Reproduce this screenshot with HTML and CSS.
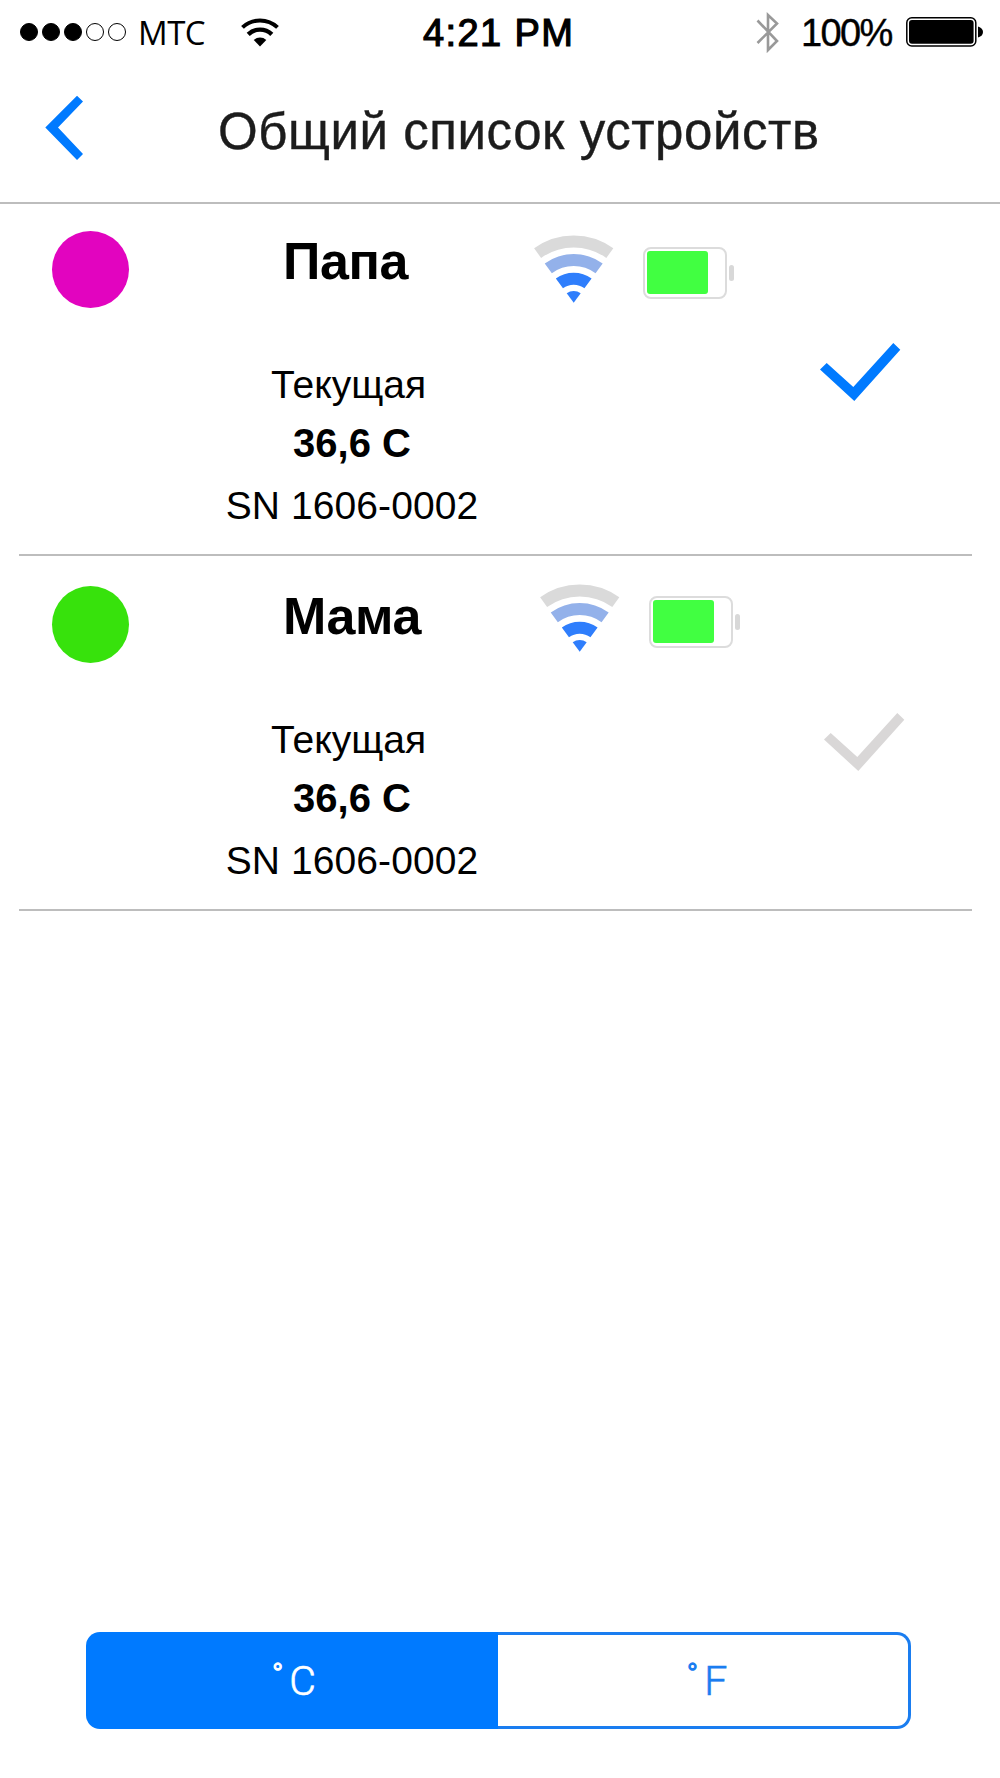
FILE: index.html
```html
<!DOCTYPE html>
<html lang="ru">
<head>
    <meta charset="UTF-8">
    <meta name="viewport" content="width=device-width, initial-scale=1.0">
    <title>Общий список устройств</title>
    <link rel="stylesheet" href="styles.css">
</head>
<body>
    <div class="status-bar">
        <div class="status-left">
            <div class="signal">
                <span class="signal-dot full"></span>
                <span class="signal-dot full"></span>
                <span class="signal-dot full"></span>
                <span class="signal-dot"></span>
                <span class="signal-dot"></span>
            </div>
            <span class="carrier">МТС</span>
            <svg class="status-wifi" width="38" height="29" viewBox="0 0 38 29">
                <path d="M1.5 9.4 A25.5 25.5 0 0 1 36.5 9.4" fill="none" stroke="#000" stroke-width="4"/>
                <path d="M7.2 16.4 A17 17 0 0 1 30.8 16.4" fill="none" stroke="#000" stroke-width="4.4"/>
                <path d="M12.7 22 A9.5 9.5 0 0 1 25.3 22 L19 28.5 Z"/>
            </svg>
        </div>
        <span class="time">4:21 PM</span>
        <div class="status-right">
            <svg width="24" height="43" viewBox="0 0 24 43">
                <path d="M1.5 9.5 L21 30 L12 39 V4 L21 12.5 L1.5 32" fill="none" stroke="#999" stroke-width="2.6"/>
            </svg>
            <span class="percent">100%</span>
            <svg class="status-battery" width="78" height="30" viewBox="0 0 78 30">
                <rect x="0.8" y="0.8" width="69" height="28.2" rx="5" fill="#fff" stroke="#000" stroke-width="1.5"/>
                <rect x="3" y="3" width="64.6" height="23.8" rx="3"/>
                <path d="M72 9.5 Q77 11 77 15 Q77 19 72 20.5 Z"/>
            </svg>
        </div>
    </div>

    <div class="header">
        <svg class="back" width="39" height="66" viewBox="0 0 39 66">
            <path d="M0.3 32.4 L32 0.7 L38 6.4 L13 32.4 L38 59 L32 65 Z" fill="#007aff"/>
        </svg>
        <h1>Общий список устройств</h1>
    </div>

    <div class="device-list">
        <div class="device">
            <div class="color-dot pink"></div>
            <div class="info">
                <h2>Папа</h2>
                <p class="label">Текущая</p>
                <p class="temperature">36,6 C</p>
                <p class="serial">SN 1606-0002</p>
            </div>
            <div class="indicators">
                <svg width="80" height="68" viewBox="0 0 80 68">
                    <g fill="none" stroke-width="12">
                        <path d="M3.6 18.1 A61.7 61.7 0 0 1 75.8 18.1" stroke="#dadada"/>
                        <path d="M14.3 33.4 A42.7 42.7 0 0 1 65.1 33.4" stroke="#93b1ea"/>
                        <path d="M25.4 48.4 A24 24 0 0 1 54 48.4" stroke="#2f7efc"/>
                    </g>
                    <path d="M32.7 58.3 A11.7 11.7 0 0 1 46.7 58.3 L39.7 67.7 Z" fill="#2f7efc"/>
                </svg>
                <div class="battery"><div class="battery-level"></div></div>
            </div>
            <svg class="check active" width="81" height="59" viewBox="0 0 81 59">
                <path d="M0 26.5 L6.7 20 L33.3 44 L73.3 0 L80.3 6.7 L34.3 58 Z"/>
            </svg>
        </div>

        <div class="device second">
            <div class="color-dot green"></div>
            <div class="info">
                <h2>Мама</h2>
                <p class="label">Текущая</p>
                <p class="temperature">36,6 C</p>
                <p class="serial">SN 1606-0002</p>
            </div>
            <div class="indicators">
                <svg width="80" height="68" viewBox="0 0 80 68">
                    <g fill="none" stroke-width="12">
                        <path d="M3.6 18.1 A61.7 61.7 0 0 1 75.8 18.1" stroke="#dadada"/>
                        <path d="M14.3 33.4 A42.7 42.7 0 0 1 65.1 33.4" stroke="#93b1ea"/>
                        <path d="M25.4 48.4 A24 24 0 0 1 54 48.4" stroke="#2f7efc"/>
                    </g>
                    <path d="M32.7 58.3 A11.7 11.7 0 0 1 46.7 58.3 L39.7 67.7 Z" fill="#2f7efc"/>
                </svg>
                <div class="battery"><div class="battery-level"></div></div>
            </div>
            <svg class="check" width="81" height="59" viewBox="0 0 81 59">
                <path d="M0 26.5 L6.7 20 L33.3 44 L73.3 0 L80.3 6.7 L34.3 58 Z"/>
            </svg>
        </div>
    </div>

    <div class="units">
        <button class="unit selected"><span class="degree">°</span>C</button>
        <button class="unit"><span class="degree">°</span>F</button>
    </div>
</body>
</html>
```
FILE: styles.css
```css
* {
    margin: 0;
    padding: 0;
    box-sizing: border-box;
}

body {
    font-family: "Liberation Sans", Arial, sans-serif;
    background: #fff;
    color: #000;
    width: 1000px;
    height: 1778px;
    display: flex;
    flex-direction: column;
    overflow: hidden;
}

svg {
    display: block;
    flex-shrink: 0;
}

/* status bar */
.status-bar {
    height: 64px;
    padding: 0 16px 0 20px;
    display: grid;
    grid-template-columns: 403px 1fr auto;
    align-items: center;
}

.status-left, .status-right {
    display: flex;
    align-items: center;
}

.signal {
    display: flex;
    gap: 4px;
}

.signal-dot {
    width: 18px;
    height: 18px;
    border: 1.5px solid #000;
    border-radius: 50%;
}

.signal-dot.full {
    background: #000;
}

.carrier {
    font-family: "Open Sans", sans-serif;
    font-size: 33px;
    line-height: 62px;
    padding-top: 2px;
    margin-left: 12px;
    letter-spacing: -0.5px;
    width: 85px;
}

.status-wifi {
    margin-left: 18px;
}

.time {
    font-size: 38px;
    line-height: 62px;
    padding-top: 2px;
    letter-spacing: 1.4px;
    -webkit-text-stroke: 1.2px #000;
}

.percent {
    font-size: 38px;
    line-height: 61px;
    padding-top: 3px;
    letter-spacing: -1.6px;
    margin-left: 21px;
    width: 105px;
    -webkit-text-stroke: 0.4px #000;
}

/* header */
.header {
    height: 140px;
    padding-left: 45px;
    border-bottom: 2px solid #bdbdbd;
    display: flex;
    align-items: flex-start;
}

.back {
    margin-top: 31px;
}

.header h1 {
    font-size: 51px;
    font-weight: normal;
    line-height: 60px;
    letter-spacing: 0.55px;
    color: #1c1c1c;
    margin: 38px 0 0 134px;
    white-space: nowrap;
    -webkit-text-stroke: 0.4px #1c1c1c;
}

/* devices */
.device-list {
    margin: -3px 28px 0 19px;
}

.device {
    height: 355px;
    border-bottom: 2px solid #bdbdbd;
    display: flex;
    align-items: flex-start;
}

.color-dot {
    width: 77px;
    height: 77px;
    margin: 30px 96px 0 33px;
    border-radius: 50%;
    flex-shrink: 0;
}

.color-dot.pink {
    background: #e204bf;
}

.color-dot.green {
    background: #37e20c;
}

.info {
    width: 254px;
    padding-top: 30px;
    text-align: center;
    white-space: nowrap;
}

.info h2 {
    font-size: 52px;
    line-height: 60px;
    letter-spacing: -0.4px;
    text-align: left;
    padding-left: 58px;
}

.info p {
    font-size: 39px;
    line-height: 56px;
}

.info .label {
    margin-top: 66px;
    padding-right: 7px;
}

.info .temperature {
    font-weight: bold;
    font-size: 40px;
    margin-top: 2px;
}

.info .serial {
    margin-top: 7px;
    letter-spacing: 0.1px;
}

.indicators {
    display: flex;
    align-items: center;
    gap: 29px;
    margin: 34px 0 0 55px;
}

.battery {
    position: relative;
    width: 84px;
    height: 52px;
    margin-top: 7px;
    padding: 2px;
    border: 2px solid #dcdcdc;
    border-radius: 8px;
}

.battery::after {
    content: "";
    position: absolute;
    right: -9px;
    top: 16px;
    width: 5px;
    height: 16px;
    border-radius: 3px;
    background: #d8d8d8;
}

.battery-level {
    width: 61px;
    height: 43px;
    border-radius: 3px;
    background: #41ff41;
}

.check {
    margin: 142px 0 0 93px;
    fill: #d9d7d7;
}

.check.active {
    fill: #007aff;
}

.second .indicators {
    margin: 28px 0 0 61px;
}

.second .check {
    margin: 157px 0 0 91px;
}

/* unit switch */
.units {
    width: 825px;
    height: 97px;
    margin: auto 0 49px 86px;
    display: grid;
    grid-template-columns: 412px 413px;
}

.unit {
    border: 3px solid #1a7df0;
    border-left: none;
    border-radius: 0 14px 14px 0;
    background: #fff;
    color: #1a7df0;
    font-family: Roboto, sans-serif;
    font-size: 41px;
    font-weight: 300;
    padding-left: 8px;
    -webkit-text-stroke: 0.6px currentColor;
}

.unit.selected {
    border: none;
    border-radius: 14px 0 0 14px;
    background: #007aff;
    color: #fff;
    padding-left: 4px;
}

.degree {
    font-size: 30px;
    line-height: 1;
    margin-right: 6px;
    vertical-align: 11px;
    -webkit-text-stroke: 1.2px currentColor;
}
```
